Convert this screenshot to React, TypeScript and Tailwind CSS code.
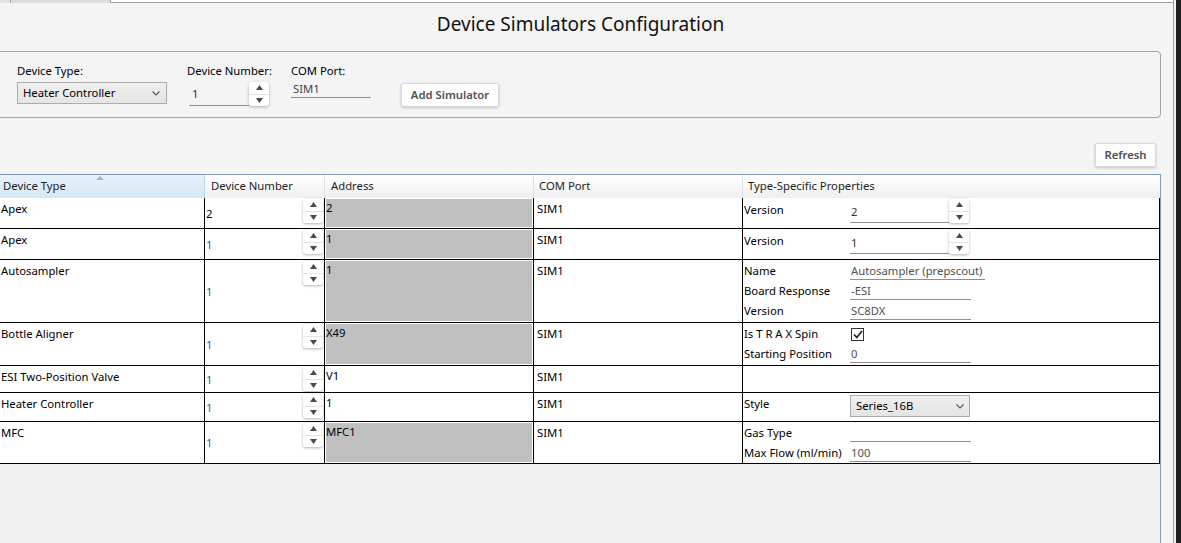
import React from "react";

type Row = {
  type: string;
  num: string;
  numBlue: boolean;
  addr: string;
  addrGray: boolean;
  height: string;
  kind: "version" | "autosampler" | "bottle" | "none" | "style" | "mfc";
  version?: string;
};

const rows: Row[] = [
  { type: "Apex", num: "2", numBlue: false, addr: "2", addrGray: true, height: "h-[31px]", kind: "version", version: "2" },
  { type: "Apex", num: "1", numBlue: true, addr: "1", addrGray: true, height: "h-[31px]", kind: "version", version: "1" },
  { type: "Autosampler", num: "1", numBlue: true, addr: "1", addrGray: true, height: "h-[63px]", kind: "autosampler" },
  { type: "Bottle Aligner", num: "1", numBlue: true, addr: "X49", addrGray: true, height: "h-[43px]", kind: "bottle" },
  { type: "ESI Two-Position Valve", num: "1", numBlue: true, addr: "V1", addrGray: false, height: "h-[27px]", kind: "none" },
  { type: "Heater Controller", num: "1", numBlue: true, addr: "1", addrGray: false, height: "h-[29px]", kind: "style" },
  { type: "MFC", num: "1", numBlue: true, addr: "MFC1", addrGray: true, height: "h-[42px]", kind: "mfc" },
];

const Tri = ({ up }: { up: boolean }) => (
  <svg width="7" height="5" viewBox="0 0 7 5">
    <path d={up ? "M3.5 0L7 5H0z" : "M0 0H7L3.5 5z"} fill="#4a4a4a" />
  </svg>
);

const SpinButtons = () => (
  <div className="flex h-[24px] w-[20px] shrink-0 flex-col rounded-[3px] bg-white shadow-[0_1px_3px_rgba(0,0,0,0.3)]">
    <div className="flex flex-1 items-center justify-center border-b border-[#e4e4e4]">
      <Tri up />
    </div>
    <div className="flex flex-1 items-center justify-center">
      <Tri up={false} />
    </div>
  </div>
);

const Chevron = () => (
  <svg width="8" height="5" viewBox="0 0 8 5">
    <path d="M0.5 0.5L4 4L7.5 0.5" stroke="#555" strokeWidth="1.1" fill="none" />
  </svg>
);

const PropLine = ({ label, value, wide }: { label: string; value: string; wide?: boolean }) => (
  <div className="flex h-[20px] items-center">
    <div className="w-[106px] shrink-0 whitespace-nowrap">{label}</div>
    <div
      className={`h-[17px] whitespace-nowrap border-b border-[#8e8e8e] pl-[1px] leading-[16px] text-[#505050] ${
        wide ? "w-[135px]" : "w-[121px]"
      }`}
    >
      {value}
    </div>
  </div>
);

const Props = ({ row }: { row: Row }) => {
  if (row.kind === "version") {
    return (
      <div className="flex items-start pt-[1px]">
        <div className="w-[106px] shrink-0 pt-[3px]">Version</div>
        <div className="h-[24px] w-[99px] border-b border-[#8e8e8e] pl-[1px] pt-[5px] text-[#333]">{row.version}</div>
        <SpinButtons />
      </div>
    );
  }
  if (row.kind === "autosampler") {
    return (
      <div className="flex flex-col pt-[1px]">
        <PropLine label="Name" value="Autosampler (prepscout)" wide />
        <PropLine label="Board Response" value="-ESI" />
        <PropLine label="Version" value="SC8DX" />
      </div>
    );
  }
  if (row.kind === "bottle") {
    return (
      <div className="flex flex-col pt-[1px]">
        <div className="flex h-[20px] items-center">
          <div className="w-[107px] shrink-0">Is T R A X Spin</div>
          <div className="flex h-[13px] w-[13px] items-center justify-center border border-[#333] bg-white">
            <svg width="10" height="9" viewBox="0 0 10 9">
              <path d="M1 4.5L3.8 7.5L9 1" stroke="#222" strokeWidth="1.7" fill="none" />
            </svg>
          </div>
        </div>
        <PropLine label="Starting Position" value="0" />
      </div>
    );
  }
  if (row.kind === "style") {
    return (
      <div className="flex items-center pt-[2px]">
        <div className="w-[106px] shrink-0 pb-[3px]">Style</div>
        <div className="flex h-[22px] w-[120px] items-center justify-between border border-[#adadad] bg-gradient-to-b from-[#f0f0f0] to-[#e4e4e4] pl-[5px] pr-[5px]">
          <span>Series_16B</span>
          <Chevron />
        </div>
      </div>
    );
  }
  if (row.kind === "mfc") {
    return (
      <div className="flex flex-col pt-[1px]">
        <PropLine label="Gas Type" value="" />
        <PropLine label="Max Flow (ml/min)" value="100" />
      </div>
    );
  }
  return null;
};

export default function App() {
  return (
    <div className="flex h-[543px] w-[1181px] overflow-hidden bg-[#1e1e1e] text-[11.3px] text-black [font-family:'Noto_Sans','Segoe_UI',sans-serif]">
      <div className="flex w-[1174px] flex-col border-r border-[#9c9c9c] bg-[#f4f4f4]">
        {/* tab strip */}
        <div className="flex h-[3px] shrink-0">
          <div className="w-[10px] bg-[#e2e2e2]" />
          <div className="w-[101px] border-x border-[#a0a0a0] bg-[#dedede]" />
          <div className="flex-1 border-b border-[#a0a0a0] bg-white" />
        </div>

        <div className="flex w-[1161px] flex-1 flex-col">
          <div className="h-[48px] shrink-0 pt-[7px] text-center text-[19px] leading-[28px] text-[#111]">
            Device Simulators Configuration
          </div>

          {/* group box */}
          <div className="-ml-[4px] flex h-[67px] shrink-0 items-start rounded-[4px] border border-[#a2a2a2] pl-[20px] pt-[11px]">
            <div className="flex w-[150px] flex-col">
              <div className="h-[16px] leading-[16px]">Device Type:</div>
              <div className="mt-[3px] flex h-[22px] items-center justify-between border border-[#acacac] bg-gradient-to-b from-[#f0f0f0] to-[#e5e5e5] pl-[5px] pr-[6px]">
                <span>Heater Controller</span>
                <Chevron />
              </div>
            </div>
            <div className="ml-[20px] flex w-[84px] flex-col">
              <div className="h-[16px] whitespace-nowrap leading-[16px]">Device Number:</div>
              <div className="mt-[3px] flex items-start pl-[2px]">
                <div className="h-[24px] w-[60px] border-b border-[#8e8e8e] pl-[3px] pt-[4px] text-[#333]">1</div>
                <SpinButtons />
              </div>
            </div>
            <div className="ml-[20px] flex w-[80px] flex-col">
              <div className="h-[16px] leading-[16px]">COM Port:</div>
              <div className="mt-[2px] h-[17px] w-[80px] border-b border-[#8e8e8e] pl-[2px] leading-[16px] text-[#444]">SIM1</div>
            </div>
            <button className="ml-[30px] mt-[20px] h-[24px] w-[98px] rounded-[2px] border border-[#d8d8d8] bg-[#fdfdfd] font-semibold text-[#505050] shadow-[0_1px_3px_rgba(0,0,0,0.2)]">
              Add Simulator
            </button>
          </div>

          <div className="mt-[25px] flex shrink-0 justify-end pr-[5px]">
            <button className="h-[24px] w-[61px] rounded-[2px] border border-[#d8d8d8] bg-[#fdfdfd] font-semibold text-[#505050] shadow-[0_1px_3px_rgba(0,0,0,0.2)]">
              Refresh
            </button>
          </div>

          {/* grid */}
          <div className="mt-[7px] flex flex-1 flex-col border-r border-t border-[#7f9db9] bg-[#efefef]">
            <div className="grid h-[23px] shrink-0 grid-cols-[205px_120px_209px_209px_1fr] bg-gradient-to-b from-white to-[#efefef] text-[#1e1e1e]">
              <div className="relative flex items-center border-r border-[#bcd8ef] bg-gradient-to-b from-[#e6f2fb] to-[#d6e8f5] pl-[3px]">
                Device Type
                <svg className="absolute left-[96px] top-[1px]" width="8" height="4" viewBox="0 0 8 4">
                  <path d="M4 0L8 4H0z" fill="#9fb6c9" />
                </svg>
              </div>
              <div className="flex items-center border-r border-[#e2e2e2] pl-[6px]">Device Number</div>
              <div className="flex items-center border-r border-[#e2e2e2] pl-[6px]">Address</div>
              <div className="flex items-center border-r border-[#e2e2e2] pl-[5px]">COM Port</div>
              <div className="flex items-center pl-[5px]">Type-Specific Properties</div>
            </div>

            {rows.map((row, i) => (
              <div
                key={i}
                className={`grid shrink-0 grid-cols-[205px_120px_209px_209px_1fr] border-b border-black bg-white ${row.height}`}
              >
                <div className="border-r border-black pl-[1px] pt-[3px] leading-[16px]">{row.type}</div>
                <div className="flex border-r border-black pl-[1px] pr-[1px] pt-[1px]">
                  <div className={`flex-1 self-center leading-[16px] ${row.numBlue ? "text-[#1f5fa8]" : "text-black"}`}>
                    {row.num}
                  </div>
                  <SpinButtons />
                </div>
                <div className="flex border-r border-black p-[1px]">
                  <div className={`flex-1 pt-[1px] leading-[16px] ${row.addrGray ? "bg-[#c0c0c0]" : ""}`}>{row.addr}</div>
                </div>
                <div className="border-r border-black pl-[3px] pt-[3px] leading-[16px]">SIM1</div>
                <div className="border-r border-black pl-[1px]">
                  <Props row={row} />
                </div>
              </div>
            ))}
          </div>
        </div>
      </div>
      <div className="w-[2px] bg-[#f0f0f0]" />
      <div className="flex-1 bg-[#1e1e1e]" />
    </div>
  );
}
